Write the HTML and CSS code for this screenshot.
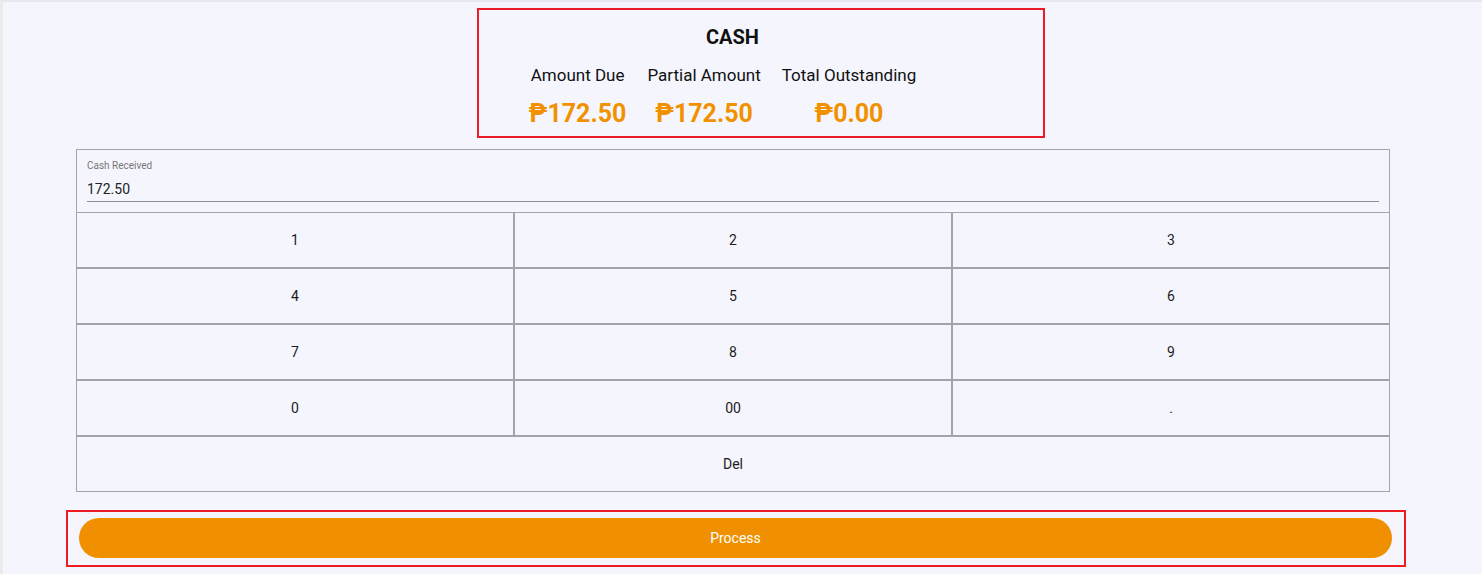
FILE: index.html
```html
<!DOCTYPE html>
<html lang="en">
<head>
  <meta charset="UTF-8" />
  <meta name="viewport" content="width=device-width, initial-scale=1.0" />
  <title>Cash Payment</title>
  <link rel="stylesheet" href="styles.css">
</head>
<body>
  <div class="page">
    <div class="pay">
      <section class="summary">
        <h2>CASH</h2>
        <div class="totals">
          <div class="total">
            <span class="label">Amount Due</span>
            <span class="value">₱172.50</span>
          </div>
          <div class="total">
            <span class="label">Partial Amount</span>
            <span class="value">₱172.50</span>
          </div>
          <div class="total">
            <span class="label">Total Outstanding</span>
            <span class="value">₱0.00</span>
          </div>
        </div>
      </section>

      <section class="keypad">
        <div class="field">
          <label for="cash">Cash Received</label>
          <input id="cash" type="text" value="172.50" />
        </div>
        <div class="keys">
          <button>1</button>
          <button>2</button>
          <button>3</button>
          <button>4</button>
          <button>5</button>
          <button>6</button>
          <button>7</button>
          <button>8</button>
          <button>9</button>
          <button>0</button>
          <button>00</button>
          <button>.</button>
          <button class="del">Del</button>
        </div>
      </section>

      <div class="process-wrap">
        <button class="process">Process</button>
      </div>
    </div>
  </div>
</body>
</html>
```

FILE: styles.css
```css
* { box-sizing: border-box; }
body {
  margin: 0;
  font-family: Roboto, 'Liberation Sans', sans-serif;
  background-color: #f5f6fd;
  color: #1c1c1c;
}
.page {
  min-height: 100vh;
  border-top: 2px solid #e7e8ec;
  border-left: 3px solid #ebebeb;
  padding-top: 6px;
}
.pay {
  width: 1314px;
  margin-left: 73px;
}
.summary {
  width: 568px;
  height: 130px;
  margin-left: 401px;
  border: 2px solid #ed1c24;
  padding: 15px 57px 0 0;
  text-align: center;
}
.summary h2 {
  margin: 0;
  font-size: 20px;
  line-height: 24px;
  font-weight: bold;
  color: #111;
}
.totals {
  display: flex;
  justify-content: center;
  gap: 21px;
  padding-right: 20px;
  margin-top: 16px;
}
.total {
  display: flex;
  flex-direction: column;
  align-items: center;
}
.total .label {
  font-size: 17px;
  line-height: 20px;
  color: #111;
}
.total .value {
  margin-top: 13px;
  font-size: 25px;
  line-height: 32px;
  font-weight: bold;
  color: #f29100;
}
.keypad {
  margin-top: 11px;
  border: 1px solid #a0a4ae;
}
.field {
  padding: 10px 10px 0;
}
.field label {
  display: block;
  font-size: 10px;
  line-height: 12px;
  color: #777;
}
.field input {
  display: block;
  width: 100%;
  margin: 8px 0 10px;
  padding: 0 0 3px;
  border: none;
  border-bottom: 1px solid #8a8d96;
  background: none;
  font-family: inherit;
  font-size: 14px;
  line-height: 18px;
  color: #222;
  outline: none;
}
.keys {
  display: grid;
  grid-template-columns: repeat(3, 1fr);
  grid-auto-rows: 54px;
  gap: 2px;
  border-top: 1px solid #a0a4ae;
  background-color: #a0a4ae;
}
.keys button {
  border: none;
  background-color: #f5f6fd;
  font-family: inherit;
  font-size: 14px;
  color: #1c1c1c;
  cursor: pointer;
}
.keys .del { grid-column: 1 / 4; }
.process-wrap {
  margin: 18px -16px 0 -10px;
  border: 2px solid #ed1c24;
  padding: 6px 12px 7px 11px;
}
.process {
  display: block;
  width: 100%;
  height: 40px;
  border: none;
  border-radius: 20px;
  background-color: #f09000;
  color: white;
  font-family: inherit;
  font-size: 14px;
  cursor: pointer;
}
```
